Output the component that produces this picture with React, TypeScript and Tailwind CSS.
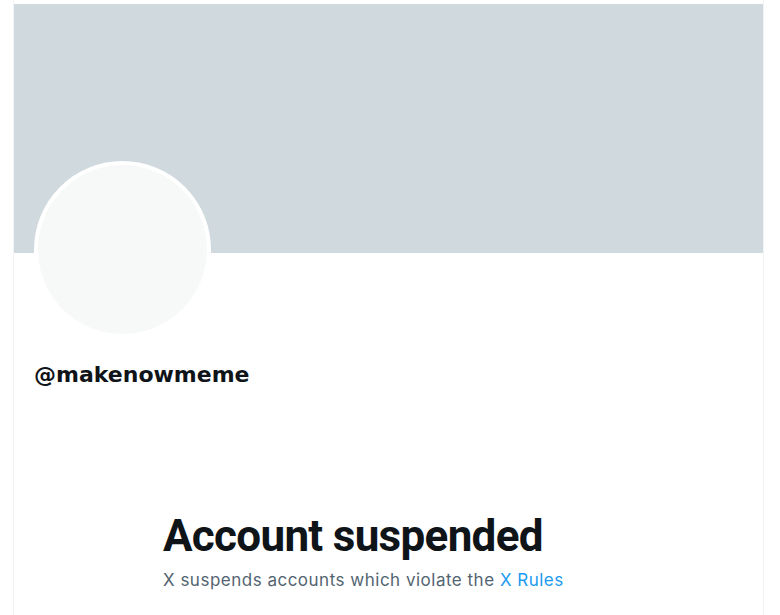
export default function App() {
  return (
    <div className="min-h-[615px] bg-white font-['Inter',sans-serif]">
      <div className="ml-[13px] w-[751px] min-h-[615px] border-x border-[#eff3f4] pt-[4px]">
        {/* banner */}
        <div className="h-[249px] bg-[#cfd9de]" />

        {/* avatar */}
        <div className="ml-[20px] -mt-[92px] w-[177px] h-[177px] rounded-full border-4 border-white bg-[#f7f9f9]" />

        <div className="ml-[20px] mt-[23px] font-['DejaVu_Sans',sans-serif] text-[22px] leading-[28px] font-bold text-[#0f1419]">
          @makenowmeme
        </div>

        <div className="ml-[149px] mt-[121px] flex flex-col gap-[6px]">
          <h1 className="font-['Roboto',sans-serif] text-[44px] leading-[52px] font-bold tracking-[-0.7px] text-[#0f1419]">Account suspended</h1>
          <p className="text-[17px] leading-[24px] tracking-[0.5px] text-[#536471]">
            X suspends accounts which violate the <a href="#" className="text-[#1d9bf0]">X Rules</a>
          </p>
        </div>
      </div>
    </div>
  );
}
